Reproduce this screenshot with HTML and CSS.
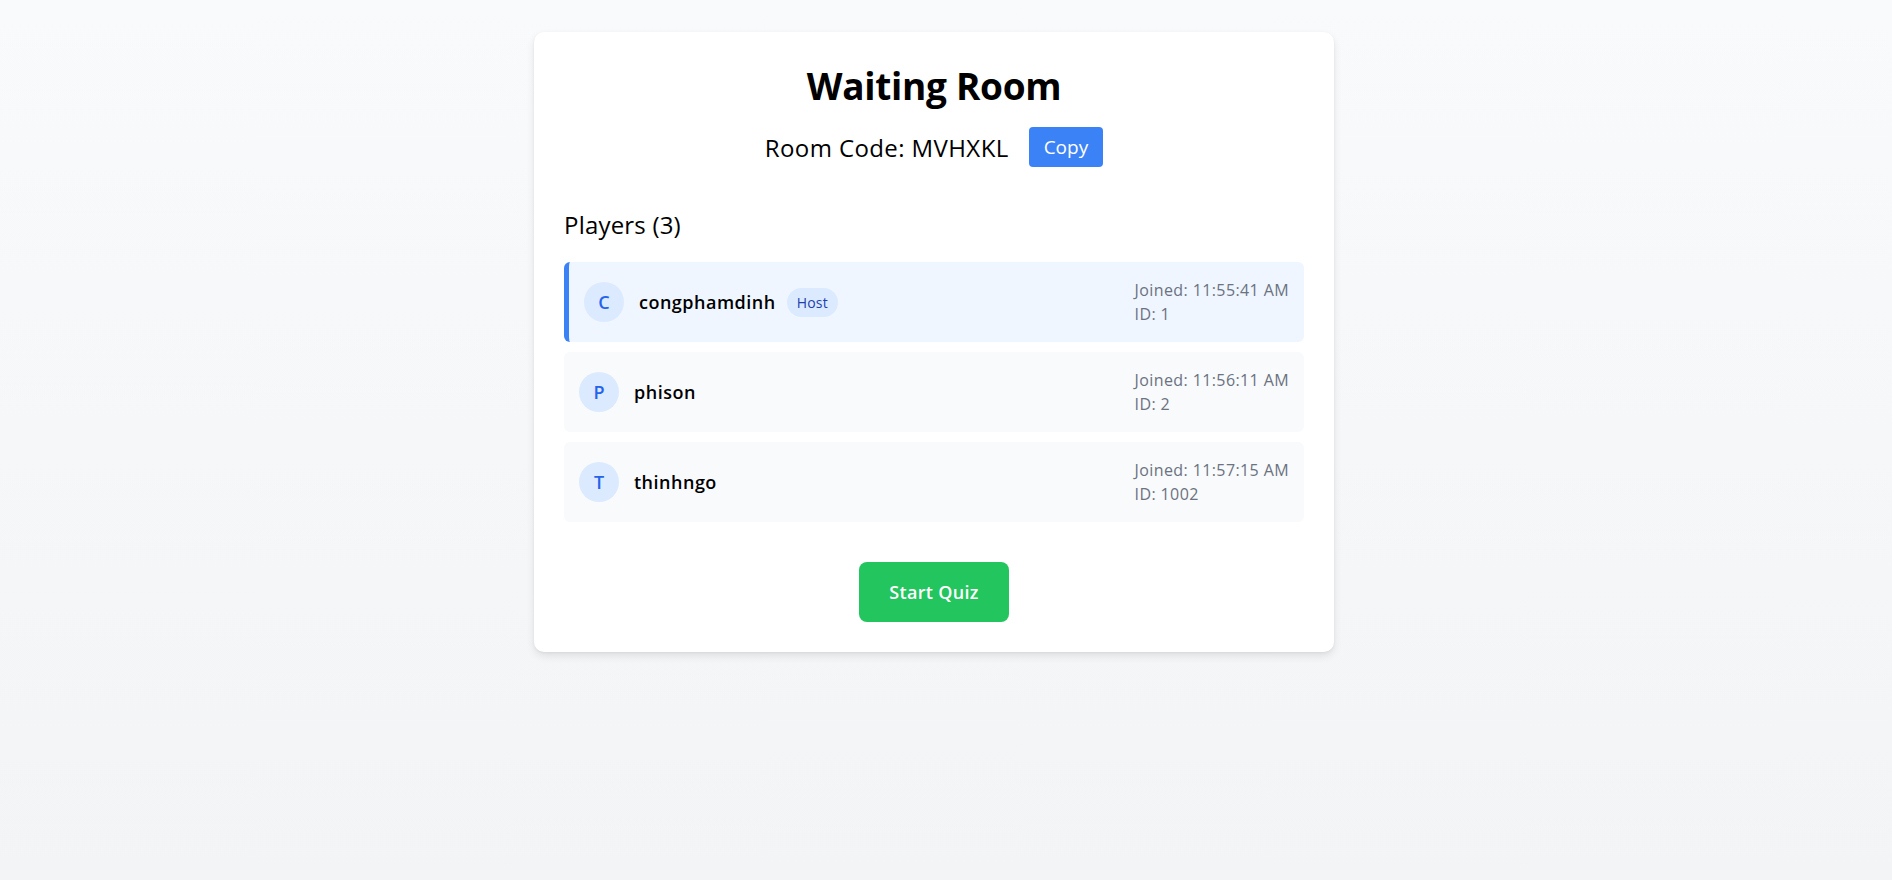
FILE: index.html
```html
<!DOCTYPE html>
<html lang="en">
<head>
<meta charset="utf-8">
<title>Waiting Room</title>
<link rel="stylesheet" href="styles.css">
</head>
<body>
<div class="page">
  <div class="card">
    <h1 class="title">Waiting Room</h1>
    <div class="room-code">
      <span class="room-code-text">Room Code: MVHXKL</span>
      <button class="copy-btn">Copy</button>
    </div>
    <h2 class="players-title">Players (3)</h2>
    <div class="player-list">
      <div class="player host">
        <div class="player-left">
          <div class="avatar">C</div>
          <span class="name">congphamdinh</span>
          <span class="badge">Host</span>
        </div>
        <div class="player-info">
          <div>Joined: 11:55:41 AM</div>
          <div>ID: 1</div>
        </div>
      </div>
      <div class="player">
        <div class="player-left">
          <div class="avatar">P</div>
          <span class="name">phison</span>
        </div>
        <div class="player-info">
          <div>Joined: 11:56:11 AM</div>
          <div>ID: 2</div>
        </div>
      </div>
      <div class="player">
        <div class="player-left">
          <div class="avatar">T</div>
          <span class="name">thinhngo</span>
        </div>
        <div class="player-info">
          <div>Joined: 11:57:15 AM</div>
          <div>ID: 1002</div>
        </div>
      </div>
    </div>
    <div class="actions">
      <button class="start-btn">Start Quiz</button>
    </div>
  </div>
</div>
</body>
</html>
```

FILE: styles.css
```css
html, body {
  margin: 0;
  padding: 0;
}

body {
  min-height: 880px;
  background: linear-gradient(180deg, #f9fafb 0%, #f3f4f6 100%);
  font-family: "Open Sans", "Noto Sans", sans-serif;
  color: #000;
}

.page {
  display: flex;
  justify-content: center;
  padding: 32px 24px 0 0;
}

.card {
  width: 800px;
  box-sizing: border-box;
  padding: 30px;
  background: #fff;
  border-radius: 10px;
  box-shadow: 0 4px 8px rgba(0, 0, 0, 0.09), 0 1px 3px rgba(0, 0, 0, 0.05);
}

.title {
  margin: 0 0 17px;
  font-size: 37px;
  line-height: 48px;
  font-weight: 700;
  text-align: center;
  letter-spacing: -0.3px;
}

.room-code {
  display: flex;
  justify-content: center;
  align-items: center;
  gap: 20px;
  height: 40px;
}

.room-code-text {
  font-size: 24px;
  font-weight: 500;
  letter-spacing: 0.4px;
}

.copy-btn {
  height: 40px;
  padding: 0 15px;
  border: none;
  border-radius: 4px;
  background: #3b82f6;
  color: #fff;
  font-family: inherit;
  font-size: 19px;
}

.players-title {
  margin: 43px 0 22px;
  font-size: 24px;
  line-height: 30px;
  font-weight: 500;
  letter-spacing: 0.2px;
}

.player-list {
  display: flex;
  flex-direction: column;
  gap: 10px;
}

.player {
  display: flex;
  justify-content: space-between;
  align-items: center;
  height: 80px;
  box-sizing: border-box;
  padding: 0 15px;
  background: #f8fafc;
  border-radius: 6px;
}

.player.host {
  background: #eff6ff;
  border-left: 5px solid #3b82f6;
}

.player-left {
  display: flex;
  align-items: center;
}

.avatar {
  width: 40px;
  height: 40px;
  border-radius: 50%;
  background: #dbeafe;
  color: #2563eb;
  display: flex;
  align-items: center;
  justify-content: center;
  font-size: 18px;
  font-weight: 600;
  margin-right: 15px;
}

.name {
  font-size: 18px;
  font-weight: 600;
  letter-spacing: 0.5px;
}

.badge {
  margin-left: 11px;
  height: 29px;
  line-height: 29px;
  padding: 0 10px;
  border-radius: 15px;
  background: #dbeafe;
  color: #1e40af;
  font-size: 14px;
  letter-spacing: 0.2px;
}

.player-info {
  color: #6b7280;
  font-size: 16px;
  line-height: 24px;
  letter-spacing: 0.4px;
}

.actions {
  display: flex;
  justify-content: center;
  margin-top: 40px;
}

.start-btn {
  width: 150px;
  height: 60px;
  border: none;
  border-radius: 8px;
  background: #22c55e;
  color: #fff;
  font-family: inherit;
  font-size: 18px;
  font-weight: 600;
  letter-spacing: 0.3px;
}
```
